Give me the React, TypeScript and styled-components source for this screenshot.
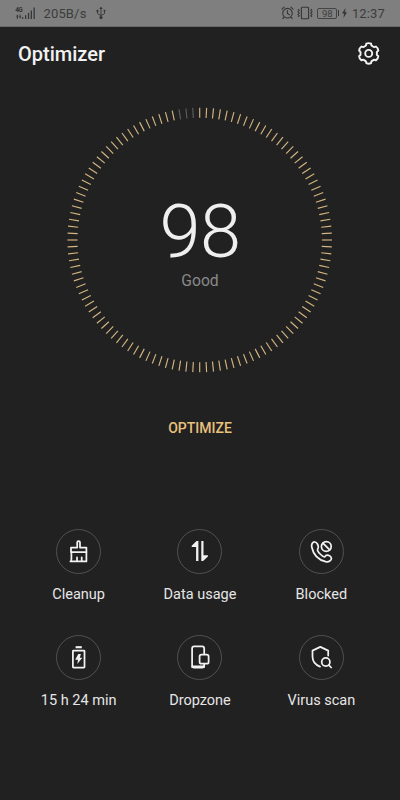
import React from "react";
import styled, { createGlobalStyle } from "styled-components";

const GlobalStyle = createGlobalStyle`
  * { box-sizing: border-box; }
  body {
    margin: 0;
    background: #212121;
    font-family: Roboto, "Noto Sans", sans-serif;
    color: #ededed;
  }
`;

const Screen = styled.main`
  width: 400px;
  height: 800px;
  display: flex;
  flex-direction: column;
  background: #212121;
  overflow: hidden;
`;

const StatusBar = styled.div`
  height: 27px;
  flex: none;
  display: flex;
  justify-content: space-between;
  align-items: center;
  padding: 0 15px;
  background: #7f7f7f;
  border-bottom: 1px solid #6a6a6a;
  color: #3c3c3c;
  svg { display: block; }
`;

const StatusGroup = styled.div`
  display: flex;
  align-items: center;
`;

const StatusText = styled.span<{ $left: number; $spacing?: number }>`
  font-size: 13px;
  line-height: 18px;
  margin-left: ${(p) => p.$left}px;
  letter-spacing: ${(p) => p.$spacing ?? 0}px;
  padding-top: 2px;
`;

const StatusIcon = styled.svg<{ $left?: number }>`
  flex: none;
  margin-left: ${(p) => p.$left ?? 0}px;
`;

const BatteryLevel = styled.span`
  width: 20px;
  height: 11px;
  margin-left: 4px;
  border: 1px solid #444;
  border-radius: 2px;
  font-size: 9.5px;
  line-height: 10px;
  text-align: center;
`;

const BatteryCap = styled.span`
  width: 1px;
  height: 6px;
  margin-left: 1px;
  background: #363636;
`;

const Header = styled.header`
  height: 53px;
  flex: none;
  display: flex;
  align-items: center;
  justify-content: space-between;
  padding: 1px 18px 0;
`;

const Title = styled.h1`
  margin: 0;
  font-size: 20px;
  line-height: 26px;
  font-weight: 500;
  color: #f2f2f2;
`;

const IconButton = styled.button`
  width: 26px;
  height: 26px;
  padding: 0;
  border: 0;
  background: none;
  color: #f2f2f2;
  svg { display: block; }
`;

const Gauge = styled.section`
  width: 270px;
  height: 270px;
  flex: none;
  margin: 24.6px auto 0;
  display: grid;
  place-items: center;
  > * { grid-area: 1 / 1; }
`;

const Score = styled.div`
  display: flex;
  flex-direction: column;
  align-items: center;
  padding-top: 5px;
`;

const ScoreValue = styled.div`
  font-size: 74px;
  line-height: 76px;
  font-weight: 300;
  color: #efefef;
  margin-bottom: 1px;
  letter-spacing: -0.6px;
`;

const ScoreLabel = styled.div`
  font-size: 15.7px;
  line-height: 20px;
  color: #898989;
`;

const OptimizeButton = styled.button`
  height: 36px;
  flex: none;
  align-self: center;
  margin-top: 35px;
  padding: 0 16px;
  border: 0;
  background: none;
  font: 500 14px/36px Roboto, sans-serif;
  color: #e9c27e;
`;

const Tools = styled.nav`
  display: grid;
  grid-template-columns: repeat(3, 1fr);
  grid-auto-rows: 106px;
  padding: 83.4px 18px 0;
`;

const Tool = styled.div`
  display: flex;
  flex-direction: column;
  align-items: center;
`;

const ToolCircle = styled.div`
  width: 45px;
  height: 45px;
  display: grid;
  place-items: center;
  border: 1px solid #505050;
  border-radius: 50%;
  svg { display: block; }
`;

const ToolLabel = styled.span`
  margin-top: 11px;
  font-size: 14.5px;
  line-height: 20px;
  white-space: nowrap;
  color: #e6e6e6;
`;

const polar = (deg: number, r: number) => {
  const a = (deg * Math.PI) / 180;
  return `${(13 + r * Math.sin(a)).toFixed(2)} ${(13 - r * Math.cos(a)).toFixed(2)}`;
};

const gearPath =
  `M${polar(-14, 10)}` +
  [0, 60, 120, 180, 240, 300]
    .map((t) => `Q${polar(t, 10.9)} ${polar(t + 14, 10)}Q${polar(t + 17, 7.9)} ${polar(t + 30, 8.2)}Q${polar(t + 43, 7.9)} ${polar(t + 46, 10)}`)
    .join("") +
  "Z";

const Gear = () => (
  <svg width="26" height="26" viewBox="0.3 0.6 26 26" fill="none" stroke="currentColor" strokeWidth="1.9" strokeLinejoin="round">
    <path d={gearPath} />
    <circle cx="13" cy="13" r="3.5" />
  </svg>
);

const TICKS = 120;
const EMPTY_TICKS = 3;

const Dial = () => (
  <svg width="270" height="270" viewBox="-134.7 -135 270 270">
    {Array.from({ length: TICKS }, (_, i) => (
      <line
        key={i}
        y1={-132.3}
        y2={-122.2}
        stroke={i >= TICKS - EMPTY_TICKS ? "#5c5c5c" : "#d3b580"}
        strokeWidth={1.15}
        transform={`rotate(${(i * 360) / TICKS})`}
      />
    ))}
  </svg>
);

const ToolIcon = ({ children }: { children: React.ReactNode }) => (
  <svg width="26" height="26" viewBox="0.3 0 26 26" fill="none" stroke="#f2f2f2" strokeWidth="1.75" strokeLinejoin="round" strokeLinecap="round">
    {children}
  </svg>
);

const tools = [
  {
    label: "Cleanup",
    icon: (
      <>
        <path d="M5.3 14V9.6H11.5V4.5Q11.5 3.1 12.9 3.1T14.3 4.5V9.6H20.7V14Z" />
        <path d="M5.7 14V20.5Q5.7 23.4 4.7 23.4H20.7V14M11.3 23V19.4M16 23V19.4" />
      </>
    ),
  },
  {
    label: "Data usage",
    icon: (
      <g fill="#f2f2f2" stroke="none">
        <path d="M11.7 3.1V23.1H9.4V8.9H5V7.7L9.8 3.1Z" />
        <path d="M14.6 3.1H16.8V17.3H21.2V18.5L16.4 23.1H14.6Z" />
      </g>
    ),
  },
  {
    label: "Blocked",
    icon: (
      <>
        <path d="M7.2 4C4.7 3.9 3.4 6.3 4.1 9.3C5.6 16.5 10.7 21.9 18 23.7C21.2 24.4 23.8 22.4 23.7 20.2C23.6 18 20.5 16.6 18.5 17.4L17.1 18.7C16 19.4 14.7 18.2 13 16.5C11.3 14.8 9.2 12.6 9.9 11.3L10.5 9.8C11.1 7.9 9.3 4.1 7.2 4Z" />
        <circle cx="18.6" cy="8.5" r="4.9" />
        <path d="M15.2 5.1L22 11.9" />
      </>
    ),
  },
  {
    label: "15 h 24 min",
    icon: (
      <>
        <rect x="7.2" y="6.5" width="11.6" height="17.1" rx="0.6" />
        <path d="M9.9 3.2H16.1" strokeWidth="2.1" strokeLinecap="butt" />
        <path d="M12.6 9.9L9.5 15.8H12.3L11.6 20L16.6 13.7H14.1L15.2 9.9Z" fill="#f2f2f2" stroke="none" />
      </>
    ),
  },
  {
    label: "Dropzone",
    icon: (
      <>
        <path d="M17.5 9.8V4.4Q17.5 2.3 15.4 2.3H7.5Q5.4 2.3 5.4 4.4V21.2Q5.4 23.5 7.5 23.5H15.4Q17.5 23.5 17.5 21.2V20.2" />
        <path d="M5.8 22.7H17.1" strokeWidth="2.5" />
        <rect x="12.9" y="10.7" width="9" height="9" rx="1.8" />
      </>
    ),
  },
  {
    label: "Virus scan",
    icon: (
      <>
        <path d="M12.3 22.6C7.2 20.6 4.8 17 4.8 12.5V6.6L12.6 2.9L20.5 6.6V11.6" />
        <circle cx="18.1" cy="18" r="4.1" />
        <path d="M21.1 21.1L23.5 23.5" />
      </>
    ),
  },
];

export default function App() {
  return (
    <>
      <GlobalStyle />
      <Screen>
        <StatusBar>
          <StatusGroup>
            <StatusIcon width="21" height="14" viewBox="0 0 21 14" fill="#363636">
              <text x="0.3" y="6" fontSize="6.5" fontWeight="700" textLength="7.5">4G</text>
              <path d="M1 10.5L2.3 8.5L3.6 10.5H2.8V13H1.8V10.5ZM3.8 10.5H4.6V8.5H5.5V10.5H6.3L5.1 12.6ZM7.1 11H8.2V13H7.1ZM10 9.3H11.3V13H10ZM12.9 7H14.2V13H12.9ZM15.7 4.4H17V13H15.7ZM18.5 1.5H19.8V13H18.5Z" />
            </StatusIcon>
            <StatusText $left={7.5} $spacing={0.15}>205B/s</StatusText>
            <StatusIcon $left={9} width="10" height="14" viewBox="0 0 10 14" fill="none" stroke="#363636" strokeWidth="0.9">
              <path d="M5 2V11M1.5 5V7Q1.5 8 2.5 8.4L5 9.4L7.5 8.4Q8.5 8 8.5 7V4.5" />
              <path d="M3.3 3L5 .4L6.7 3Z" fill="#363636" stroke="none" />
              <circle cx="5" cy="11.6" r="1.2" fill="#363636" />
              <circle cx="1.5" cy="5" r="0.8" fill="#363636" />
              <path d="M7.6 3.8H9.4V5.5H7.6Z" fill="#363636" stroke="none" />
            </StatusIcon>
          </StatusGroup>
          <StatusGroup>
            <StatusIcon width="13" height="14" viewBox="0 0 13 14" fill="none" stroke="#363636" strokeWidth="1.1" strokeLinecap="round">
              <circle cx="6.5" cy="7.2" r="4.8" />
              <path d="M6.4 4.6V7.4L8.3 8.7M1 3.1L3.1 1.2M12 3.1L9.9 1.2M2.8 11.4L1.8 12.6M10.2 11.4L11.2 12.6" />
            </StatusIcon>
            <StatusIcon $left={3} width="16" height="14" viewBox="0 0 16 14" fill="none" stroke="#363636" strokeWidth="1.1">
              <rect x="4.4" y="1.3" width="7.2" height="11.4" rx="0.8" />
              <path d="M1 3L2.2 4.3L1 5.6L2.2 7L1 8.4L2.2 9.7L1 11M15 3L13.8 4.3L15 5.6L13.8 7L15 8.4L13.8 9.7L15 11" />
            </StatusIcon>
            <BatteryLevel>98</BatteryLevel>
            <BatteryCap />
            <StatusIcon $left={3} width="5" height="10" viewBox="0 0 5 10" fill="#363636">
              <path d="M3.5 0L0 5.5H2L1.5 10L5 4.2H3Z" />
            </StatusIcon>
            <StatusText $left={4.5} $spacing={0.15}>12:37</StatusText>
          </StatusGroup>
        </StatusBar>
        <Header>
          <Title>Optimizer</Title>
          <IconButton aria-label="Settings"><Gear /></IconButton>
        </Header>
        <Gauge>
          <Dial />
          <Score>
            <ScoreValue>98</ScoreValue>
            <ScoreLabel>Good</ScoreLabel>
          </Score>
        </Gauge>
        <OptimizeButton>OPTIMIZE</OptimizeButton>
        <Tools>
          {tools.map((t) => (
            <Tool key={t.label}>
              <ToolCircle><ToolIcon>{t.icon}</ToolIcon></ToolCircle>
              <ToolLabel>{t.label}</ToolLabel>
            </Tool>
          ))}
        </Tools>
      </Screen>
    </>
  );
}
